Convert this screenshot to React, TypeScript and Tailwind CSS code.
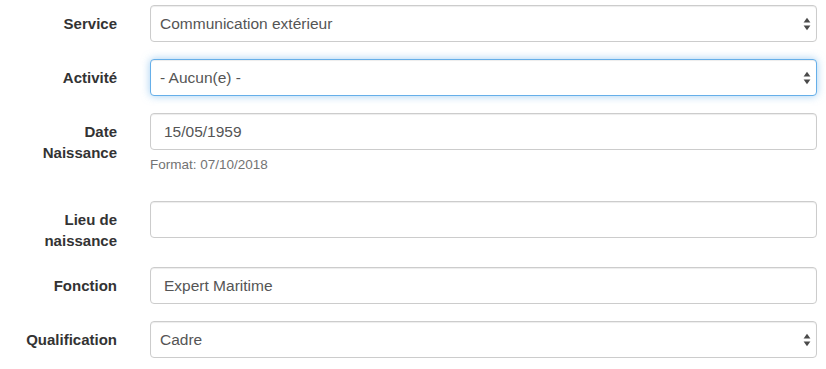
import React from "react";

const font = { fontFamily: '"Liberation Sans", Arial, Helvetica, sans-serif' };

function Arrows() {
  return (
    <svg width="8" height="14" viewBox="0 0 8 14" className="absolute right-[5px] top-1/2 -translate-y-1/2">
      <path d="M4 0.8 L7.4 5.6 L0.6 5.6 Z" fill="#4a4a4a" />
      <path d="M4 13.2 L7.4 8.4 L0.6 8.4 Z" fill="#4a4a4a" />
    </svg>
  );
}

function Field({
  value,
  select,
  focus,
}: {
  value?: string;
  select?: boolean;
  focus?: boolean;
}) {
  return (
    <div
      className={
        "relative flex h-[37px] w-[667px] items-center rounded-[4px] border bg-white text-[15.5px] text-[#555] " +
        (focus
          ? "border-[#66afe9] shadow-[inset_0_1px_1px_rgba(0,0,0,0.075),0_0_8px_rgba(102,175,233,0.6)] "
          : "border-[#ccc] shadow-[inset_0_1px_1px_rgba(0,0,0,0.075)] ") +
        (select ? "pl-[9px]" : "pl-[13px]")
      }
    >
      <span className="leading-none">{value}</span>
      {select && <Arrows />}
    </div>
  );
}

function Row({
  label,
  children,
  mb,
}: {
  label: React.ReactNode;
  children: React.ReactNode;
  mb: string;
}) {
  return (
    <div className={"flex items-start " + mb}>
      <div className="w-[117px] pt-[8px] text-right text-[15px] font-bold leading-[21px] text-[#333]">
        {label}
      </div>
      <div className="ml-[33px]">{children}</div>
    </div>
  );
}

export default function App() {
  return (
    <div className="min-h-[369px] w-[826px] bg-white pt-[5px]" style={font}>
      <Row label="Service" mb="mb-[17px]">
        <Field value="Communication extérieur" select />
      </Row>
      <Row label="Activité" mb="mb-[17px]">
        <Field value="- Aucun(e) -" select focus />
      </Row>
      <Row
        label={
          <>
            Date
            <br />
            Naissance
          </>
        }
        mb="mb-[28px]"
      >
        <Field value="15/05/1959" />
        <div className="mt-[6px] text-[13.5px] leading-[17px] text-[#737373]">Format: 07/10/2018</div>
      </Row>
      <Row
        label={
          <>
            Lieu de
            <br />
            naissance
          </>
        }
        mb="mb-[16px]"
      >
        <Field value="" />
      </Row>
      <Row label="Fonction" mb="mb-[17px]">
        <Field value="Expert Maritime" />
      </Row>
      <Row label="Qualification" mb="mb-0">
        <Field value="Cadre" select />
      </Row>
    </div>
  );
}
